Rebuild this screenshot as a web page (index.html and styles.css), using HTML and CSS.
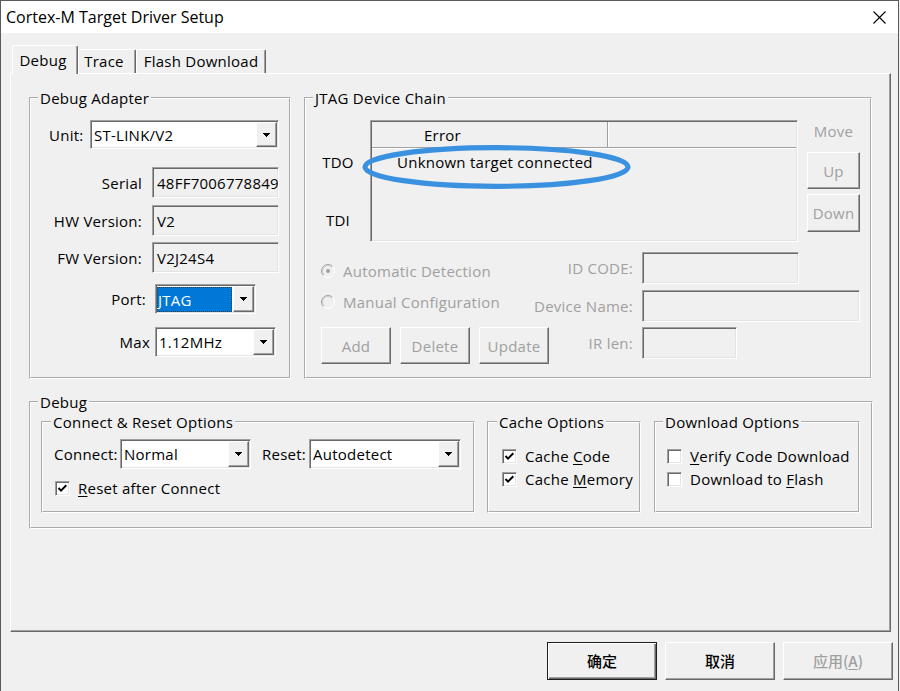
FILE: index.html
```html
<!DOCTYPE html>
<html>
<head>
<meta charset="utf-8">
<title>Cortex-M Target Driver Setup</title>
<link rel="stylesheet" href="styles.css">
</head>
<body>
<div class="window">
  <div class="titlebar">
    <span class="title">Cortex-M Target Driver Setup</span>
    <svg class="close" width="13" height="13" viewBox="0 0 13 13"><path d="M0.5 0.5L12.5 12.5M12.5 0.5L0.5 12.5" stroke="#000" stroke-width="1.1" fill="none"/></svg>
  </div>
  <div class="client">
    <div class="tabs">
      <div class="tab active">Debug</div>
      <div class="tab trace">Trace</div>
      <div class="tab flash">Flash Download</div>
    </div>
    <div class="panel">
      <div class="toprow">
        <fieldset class="group adapter">
          <legend>Debug Adapter</legend>
          <div class="row r-unit">
            <span class="lbl lbl-unit">Unit:</span>
            <div class="combo w-unit"><span class="ctext">ST-LINK/V2</span><span class="dd"><svg width="7" height="4" viewBox="0 0 7 4"><path d="M0 0H7L3.5 4Z"/></svg></span></div>
          </div>
          <div class="row r-serial">
            <span class="lbl lbl-r w111">Serial</span>
            <div class="field w-info">48FF7006778849</div>
          </div>
          <div class="row r-hw">
            <span class="lbl lbl-r w111">HW Version:</span>
            <div class="field w-info">V2</div>
          </div>
          <div class="row r-fw">
            <span class="lbl lbl-r w111">FW Version:</span>
            <div class="field w-info">V2J24S4</div>
          </div>
          <div class="row r-port">
            <span class="lbl lbl-r w115">Port:</span>
            <div class="combo w-port"><span class="ctext sel">JTAG</span><span class="dd"><svg width="7" height="4" viewBox="0 0 7 4"><path d="M0 0H7L3.5 4Z"/></svg></span></div>
          </div>
          <div class="row r-max">
            <span class="lbl lbl-r w119">Max</span>
            <div class="combo w-max"><span class="ctext">1.12MHz</span><span class="dd"><svg width="7" height="4" viewBox="0 0 7 4"><path d="M0 0H7L3.5 4Z"/></svg></span></div>
          </div>
        </fieldset>

        <fieldset class="group jtag">
          <legend>JTAG Device Chain</legend>
          <div class="chain">
            <div class="pins">
              <span class="pin tdo">TDO</span>
              <span class="pin tdi">TDI</span>
            </div>
            <div class="list">
              <div class="lhead"><div class="hcell h1">Error</div><div class="hcell h2"></div></div>
              <div class="lrow">Unknown target connected</div>
              <svg class="ring" width="269" height="44" viewBox="0 0 269 44"><ellipse cx="134.5" cy="22" rx="131.5" ry="19.3" fill="none" stroke="#3a91e0" stroke-width="5.2"/></svg>
            </div>
            <div class="move">
              <span class="movelbl dis">Move</span>
              <div class="btn dis b-up">Up</div>
              <div class="btn dis b-down">Down</div>
            </div>
          </div>
          <div class="lower">
            <div class="radio r1 dis">
              <svg width="14" height="14" viewBox="0 0 14 14"><circle cx="7" cy="7" r="6" fill="#f0f0f0"/><path d="M2.4 11.6A6.5 6.5 0 0 1 11.6 2.4" stroke="#a0a0a0" fill="none"/><path d="M11.6 2.4A6.5 6.5 0 0 1 2.4 11.6" stroke="#ffffff" fill="none"/><path d="M3.1 10.9A5.5 5.5 0 0 1 10.9 3.1" stroke="#c8c8c8" fill="none"/><circle cx="7" cy="7" r="2" fill="#a0a0a0"/></svg>
              <span>Automatic Detection</span>
            </div>
            <span class="flbl dis">ID CODE:</span>
            <div class="field f-id"></div>

            <div class="radio r2 dis">
              <svg width="14" height="14" viewBox="0 0 14 14"><circle cx="7" cy="7" r="6" fill="#f0f0f0"/><path d="M2.4 11.6A6.5 6.5 0 0 1 11.6 2.4" stroke="#a0a0a0" fill="none"/><path d="M11.6 2.4A6.5 6.5 0 0 1 2.4 11.6" stroke="#ffffff" fill="none"/><path d="M3.1 10.9A5.5 5.5 0 0 1 10.9 3.1" stroke="#c8c8c8" fill="none"/></svg>
              <span>Manual Configuration</span>
            </div>
            <span class="flbl dis">Device Name:</span>
            <div class="field f-name"></div>

            <div class="btnrow">
              <div class="btn dis b-small">Add</div>
              <div class="btn dis b-small">Delete</div>
              <div class="btn dis b-small">Update</div>
            </div>
            <span class="flbl dis">IR len:</span>
            <div class="field f-ir"></div>
          </div>
        </fieldset>
      </div>

      <fieldset class="group debug">
        <legend>Debug</legend>
        <div class="opts">
          <fieldset class="group cr">
            <legend>Connect &amp; Reset Options</legend>
            <div class="crrow">
              <span class="lbl w66">Connect:</span>
              <div class="combo w-conn"><span class="ctext">Normal</span><span class="dd"><svg width="7" height="4" viewBox="0 0 7 4"><path d="M0 0H7L3.5 4Z"/></svg></span></div>
              <span class="lbl w47 ml11">Reset:</span>
              <div class="combo w-reset"><span class="ctext">Autodetect</span><span class="dd"><svg width="7" height="4" viewBox="0 0 7 4"><path d="M0 0H7L3.5 4Z"/></svg></span></div>
            </div>
            <div class="check crcheck">
              <span class="cb"><svg width="11" height="11" viewBox="0 0 11 11"><path d="M1.5 5L4 7.6L9.3 2.3" stroke="#000" stroke-width="2" fill="none"/></svg></span>
              <span><u>R</u>eset after Connect</span>
            </div>
          </fieldset>
          <fieldset class="group cache">
            <legend>Cache Options</legend>
            <div class="checks">
              <div class="check">
                <span class="cb"><svg width="11" height="11" viewBox="0 0 11 11"><path d="M1.5 5L4 7.6L9.3 2.3" stroke="#000" stroke-width="2" fill="none"/></svg></span>
                <span>Cache <u>C</u>ode</span>
              </div>
              <div class="check">
                <span class="cb"><svg width="11" height="11" viewBox="0 0 11 11"><path d="M1.5 5L4 7.6L9.3 2.3" stroke="#000" stroke-width="2" fill="none"/></svg></span>
                <span>Cache <u>M</u>emory</span>
              </div>
            </div>
          </fieldset>
          <fieldset class="group dl">
            <legend>Download Options</legend>
            <div class="checks dlchecks">
              <div class="check">
                <span class="cb"></span>
                <span><u>V</u>erify Code Download</span>
              </div>
              <div class="check">
                <span class="cb"></span>
                <span>Download to <u>F</u>lash</span>
              </div>
            </div>
          </fieldset>
        </div>
      </fieldset>
    </div>

    <div class="buttons">
      <div class="btn cjk default">确定</div>
      <div class="btn cjk">取消</div>
      <div class="btn cjk dis">应用(<u>A</u>)</div>
    </div>
  </div>
</div>
</body>
</html>
```

FILE: styles.css
```css
* { box-sizing: border-box; }
html, body { margin: 0; padding: 0; }
body {
  width: 900px;
  height: 691px;
  overflow: hidden;
  background: #f0f0f0;
  font-family: "Open Sans", "Noto Sans CJK SC", sans-serif;
  font-size: 15px;
  letter-spacing: 0.25px;
  line-height: 20px;
  color: #000;
}
u { text-decoration: underline; text-underline-offset: 2px; }

.window {
  width: 899px;
  height: 691px;
  border: 1px solid #5a5a5a;
  border-bottom: 0;
  background: #f0f0f0;
}
.titlebar {
  height: 32px;
  background: #fff;
  display: flex;
  align-items: center;
  justify-content: space-between;
  padding: 0 12px 0 5px;
}
.title { font-size: 16px; line-height: 20px; letter-spacing: 0; }
.close { display: block; }

/* tabs */
.tabs {
  display: flex;
  align-items: flex-end;
  height: 28px;
  margin: 12px 0 0 11px;
}
.tab {
  height: 24px;
  border-left: 1px solid #fff;
  border-top: 1px solid #fff;
  border-right: 1px solid #696969;
  box-shadow: inset -1px 0 #a0a0a0;
  background: #f0f0f0;
  text-align: center;
  padding-top: 1px;
  border-radius: 2px 2px 0 0;
  white-space: nowrap;
}
.tab.active {
  width: 66px;
  height: 29px;
  margin-bottom: -1px;
  padding-top: 4px;
  padding-right: 4px;
  position: relative;
  z-index: 1;
}
.tab.trace { width: 58px; padding-right: 6px; }
.tab.flash { width: 130px; }

.panel {
  margin-left: 9px;
  width: 881px;
  height: 559px;
  border: 1px solid;
  border-color: #fff #696969 #696969 #fff;
  box-shadow: inset -1px -1px #a0a0a0;
  padding: 14px 0 0 18px;
}

/* group boxes */
.group {
  margin: 0;
  padding: 0;
  min-width: 0;
  border: 2px groove #fff;
}
.group > legend {
  padding: 0 2px;
  margin-left: 7px;
  line-height: 20px;
}
.toprow { display: flex; gap: 13px; align-items: flex-start; }
.adapter { width: 262px; height: 291px; }
.jtag { width: 568px; height: 291px; }

/* rows in adapter */
.row { display: flex; align-items: center; }
.r-unit { margin-top: 12px; height: 29px; }
.r-serial { margin-top: 18px; height: 31px; }
.r-hw { margin-top: 7px; height: 31px; }
.r-fw { margin-top: 6px; height: 31px; }
.r-port { margin-top: 11px; height: 30px; }
.r-max { margin-top: 13px; height: 30px; }
.r-unit .combo, .r-port .combo, .r-max .combo { height: 100%; }
.row .field { height: 100%; }

.lbl { white-space: nowrap; flex: none; }
.lbl-unit { width: 59px; padding-left: 18px; }
.lbl-r { text-align: right; }
.w111 { width: 111px; }
.w115 { width: 115px; }
.w119 { width: 119px; }
.w66 { width: 66px; }
.w47 { width: 47px; }
.ml11 { margin-left: 11px; }

.r-serial .field, .r-hw .field, .r-fw .field { margin-left: 10px; }
.r-port .combo { margin-left: 9px; }
.r-max .combo { margin-left: 5px; }

.field, .combo, .list, .cb {
  border: 1px solid;
  border-color: #a0a0a0 #fff #fff #a0a0a0;
  box-shadow: inset 1px 1px #696969, inset -1px -1px #e3e3e3;
}
.field {
  background: #f0f0f0;
  padding-left: 4px;
  display: flex;
  align-items: center;
  white-space: nowrap;
  overflow: hidden;
}
.w-info { width: 127px; }

.combo {
  display: flex;
  background: #fff;
  padding: 1px;
  flex: none;
}
.w-unit { width: 189px; }
.w-port { width: 101px; }
.w-max { width: 121px; }
.w-conn { width: 131px; height: 30px; }
.w-reset { width: 152px; height: 30px; }
.ctext {
  flex: 1;
  display: flex;
  align-items: center;
  padding-left: 2px;
  white-space: nowrap;
  overflow: hidden;
}
.ctext.sel {
  background: #0078d7;
  color: #fff;
  margin: 1px 1px 0 0;
  padding-left: 1px;
  outline: 1px dotted #3a3a3a;
  outline-offset: -1px;
}
.dd {
  width: 21px;
  flex: none;
  display: flex;
  align-items: center;
  justify-content: center;
  background: #f0f0f0;
  border: 1px solid;
  border-color: #fff #696969 #696969 #fff;
  box-shadow: inset -1px -1px #a0a0a0;
}
.dd svg { display: block; shape-rendering: crispEdges; }

/* buttons */
.btn {
  display: flex;
  align-items: center;
  justify-content: center;
  background: #f0f0f0;
  border: 1px solid;
  border-color: #fff #696969 #696969 #fff;
  box-shadow: inset -1px -1px #a0a0a0;
  white-space: nowrap;
}
.dis { color: #a0a0a0; }

/* JTAG chain */
.chain { display: flex; margin-top: 12px; align-items: flex-start; }
.pins { width: 64px; display: flex; flex-direction: column; align-items: center; }
.tdo { margin-top: 32px; }
.tdi { margin-top: 38px; }
.list {
  position: relative;
  width: 428px;
  height: 122px;
  background: #f0f0f0;
  padding: 1px;
}
.lhead {
  display: flex;
  height: 26px;
  border-bottom: 1px solid #a0a0a0;
  box-shadow: 0 1px #fff;
}
.hcell { display: flex; align-items: center; }
.h1 { width: 236px; padding-left: 52px; border-right: 1px solid #a0a0a0; box-shadow: 1px 0 #fff; }
.h2 { flex: 1; }
.lrow { margin-top: 4px; padding-left: 25px; }
.ring { position: absolute; left: -9px; top: 24px; }

.move { margin-left: 9px; width: 53px; display: flex; flex-direction: column; align-items: stretch; }
.movelbl { text-align: center; margin-top: 1px; }
.b-up { margin-top: 11px; height: 37px; }
.b-down { margin-top: 5px; height: 38px; }

.lower {
  display: grid;
  grid-template-columns: 202px 101px 218px;
  grid-template-rows: 38px 37px 37px;
  column-gap: 9px;
  margin-top: 10px;
  padding-left: 15px;
}
.radio { display: flex; align-items: center; gap: 8px; height: 20px; white-space: nowrap; }
.radio svg { display: block; flex: none; }
.r1 { margin-top: 9px; }
.r2 { margin-top: 2px; }
.flbl { height: 32px; display: flex; align-items: center; justify-content: flex-end; white-space: nowrap; }
.field.f-id { width: 157px; height: 32px; }
.field.f-name { width: 218px; height: 32px; }
.field.f-ir { width: 95px; height: 32px; }
.btnrow { display: flex; gap: 9px; width: max-content; }
.b-small { width: 70px; height: 37px; }

/* bottom debug group */
.debug { width: 844px; height: 137px; margin-top: 13px; }
.opts { display: flex; padding-left: 10px; align-items: flex-start; }
.cr { width: 434px; height: 101px; }
.cache { width: 154px; height: 101px; margin-left: 12px; }
.dl { width: 206px; height: 101px; margin-left: 13px; }
.cr > legend, .cache > legend { margin-left: 8px; }

.crrow { display: flex; align-items: center; margin-top: 7px; padding-left: 11px; height: 30px; }
.check { display: flex; align-items: center; gap: 8px; height: 20px; white-space: nowrap; }
.crcheck { margin-top: 9px; padding-left: 12px; }
.cb {
  width: 15px;
  height: 15px;
  flex: none;
  background: #fff;
  padding: 1px;
  display: flex;
}
.cb svg { display: block; }
.checks { margin-top: 14px; padding-left: 13px; display: flex; flex-direction: column; gap: 3px; }
.dlchecks { padding-left: 11px; }

/* dialog buttons */
.buttons {
  display: flex;
  justify-content: flex-end;
  gap: 8px;
  margin-top: 10px;
  padding-right: 5px;
}
.buttons .btn { width: 110px; height: 38px; }
.cjk { font-family: "Noto Sans CJK SC", sans-serif; font-size: 15px; font-weight: 500; letter-spacing: 0; }
.btn.default {
  border: 1px solid #1e1e1e;
  box-shadow: inset 1px 1px #fff, inset -1px -1px #696969, inset -2px -2px #a0a0a0;
}
```
